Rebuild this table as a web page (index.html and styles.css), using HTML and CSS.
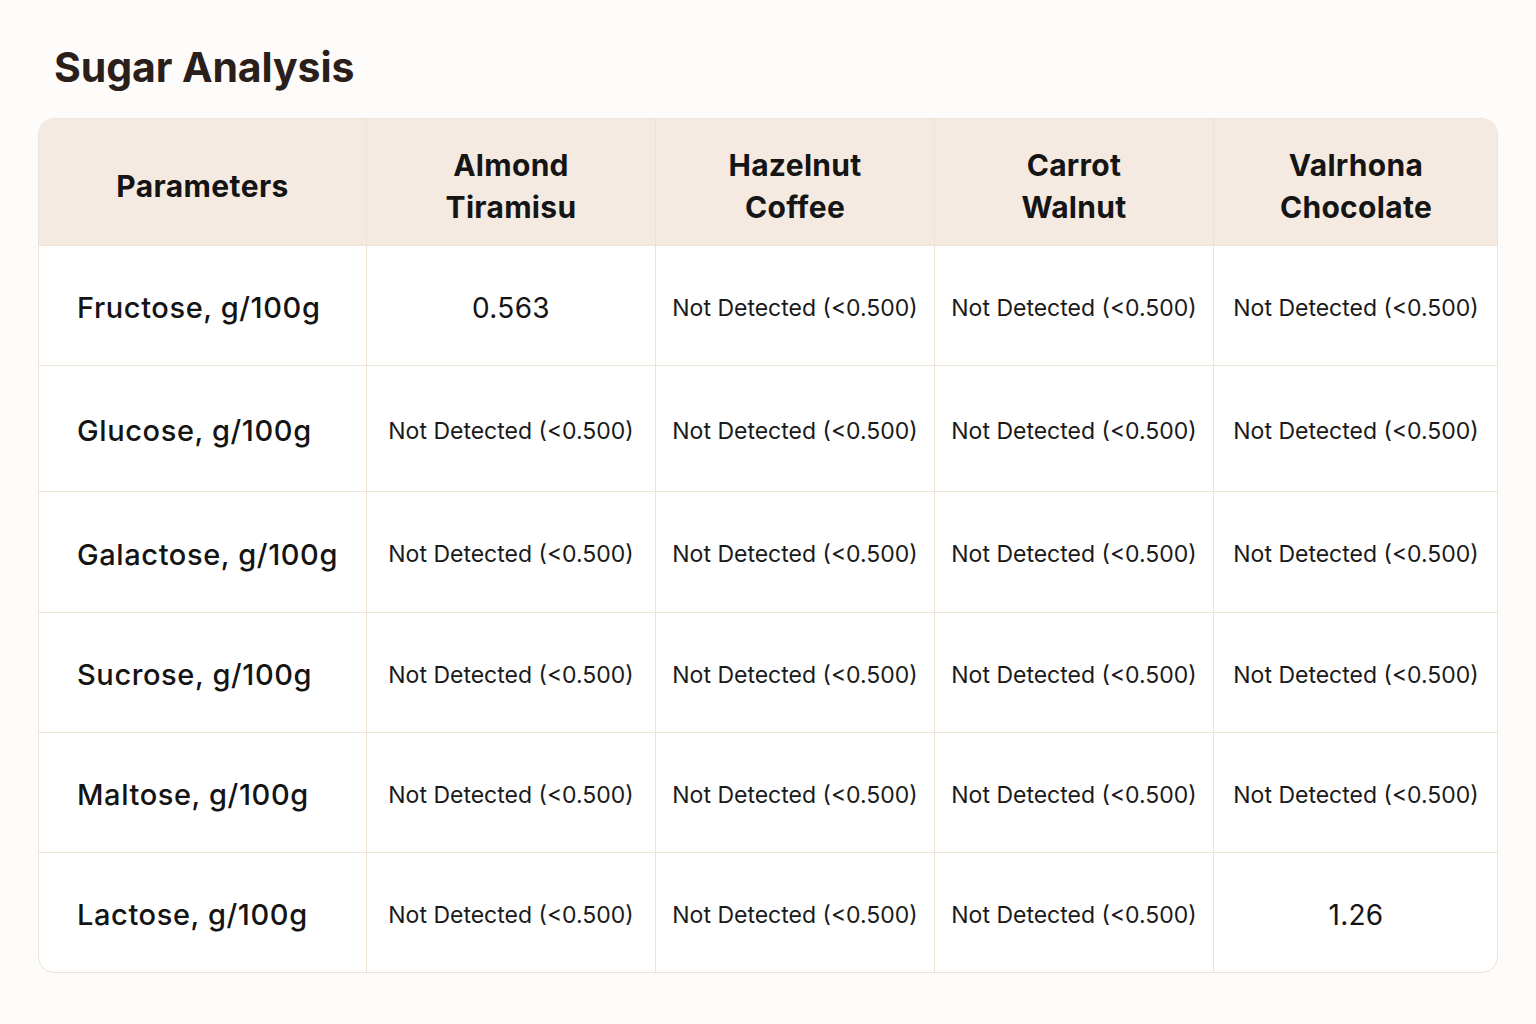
FILE: index.html
```html
<!DOCTYPE html>
<html lang="en">
<head>
<meta charset="utf-8">
<title>Sugar Analysis</title>
<link rel="stylesheet" href="styles.css">
</head>
<body>
<main class="page">
  <h1 class="title">Sugar Analysis</h1>
  <div class="table">
    <div class="cell head label">Parameters</div>
    <div class="cell head">Almond<br>Tiramisu</div>
    <div class="cell head">Hazelnut<br>Coffee</div>
    <div class="cell head">Carrot<br>Walnut</div>
    <div class="cell head last">Valrhona<br>Chocolate</div>

    <div class="cell label">Fructose, g/100g</div>
    <div class="cell num">0.563</div>
    <div class="cell val">Not Detected (&lt;0.500)</div>
    <div class="cell val">Not Detected (&lt;0.500)</div>
    <div class="cell val last">Not Detected (&lt;0.500)</div>

    <div class="cell label">Glucose, g/100g</div>
    <div class="cell val">Not Detected (&lt;0.500)</div>
    <div class="cell val">Not Detected (&lt;0.500)</div>
    <div class="cell val">Not Detected (&lt;0.500)</div>
    <div class="cell val last">Not Detected (&lt;0.500)</div>

    <div class="cell label">Galactose, g/100g</div>
    <div class="cell val">Not Detected (&lt;0.500)</div>
    <div class="cell val">Not Detected (&lt;0.500)</div>
    <div class="cell val">Not Detected (&lt;0.500)</div>
    <div class="cell val last">Not Detected (&lt;0.500)</div>

    <div class="cell label">Sucrose, g/100g</div>
    <div class="cell val">Not Detected (&lt;0.500)</div>
    <div class="cell val">Not Detected (&lt;0.500)</div>
    <div class="cell val">Not Detected (&lt;0.500)</div>
    <div class="cell val last">Not Detected (&lt;0.500)</div>

    <div class="cell label">Maltose, g/100g</div>
    <div class="cell val">Not Detected (&lt;0.500)</div>
    <div class="cell val">Not Detected (&lt;0.500)</div>
    <div class="cell val">Not Detected (&lt;0.500)</div>
    <div class="cell val last">Not Detected (&lt;0.500)</div>

    <div class="cell label bottom">Lactose, g/100g</div>
    <div class="cell val bottom">Not Detected (&lt;0.500)</div>
    <div class="cell val bottom">Not Detected (&lt;0.500)</div>
    <div class="cell val bottom">Not Detected (&lt;0.500)</div>
    <div class="cell num bottom last">1.26</div>
  </div>
</main>
</body>
</html>
```

FILE: styles.css
```css
* { box-sizing: border-box; }

html, body {
  margin: 0;
  padding: 0;
  background: #fdfcfb;
}

body {
  font-family: Inter, "Noto Sans", "Liberation Sans", sans-serif;
  color: #141414;
}

.page {
  padding: 38px 0 0 38px;
  width: 1536px;
  height: 1024px;
}

.title {
  margin: 0 0 22px 16px;
  font-size: 41px;
  line-height: 58px;
  font-weight: 700;
  color: #2b2019;
  letter-spacing: -0.1px;
}

.table {
  display: grid;
  grid-template-columns: 328px 289px 279px 279px 284px;
  grid-template-rows: 127px 120px 126px 121px 120px 120px 119px;
  width: 1460px;
  border: 1px solid #efe2d6;
  border-radius: 16px;
  overflow: hidden;
  background: #ffffff;
}

.cell {
  display: flex;
  align-items: center;
  justify-content: center;
  text-align: center;
  border-right: 1px solid #efe2d6;
  border-bottom: 1px solid #efe2d6;
  padding-top: 4px;
}

.cell.last { border-right: none; }
.cell.bottom { border-bottom: none; }

.head {
  background: #f4eae1;
  font-size: 30px;
  line-height: 42px;
  font-weight: 700;
  color: #151515;
  letter-spacing: 0.3px;
  padding-top: 7px;
}

.label {
  justify-content: flex-start;
  padding-left: 38px;
  font-size: 29px;
  font-weight: 500;
  color: #141414;
  letter-spacing: 0.6px;
}

.head.label {
  justify-content: center;
  padding-left: 0;
  padding-top: 8px;
  font-size: 30px;
  font-weight: 700;
  letter-spacing: 0.4px;
}

.val {
  font-size: 23px;
  font-weight: 400;
  color: #1a1a1a;
  letter-spacing: 0px;
}

.num {
  font-size: 28px;
  font-weight: 400;
  color: #141414;
  letter-spacing: 0.3px;
}
```
